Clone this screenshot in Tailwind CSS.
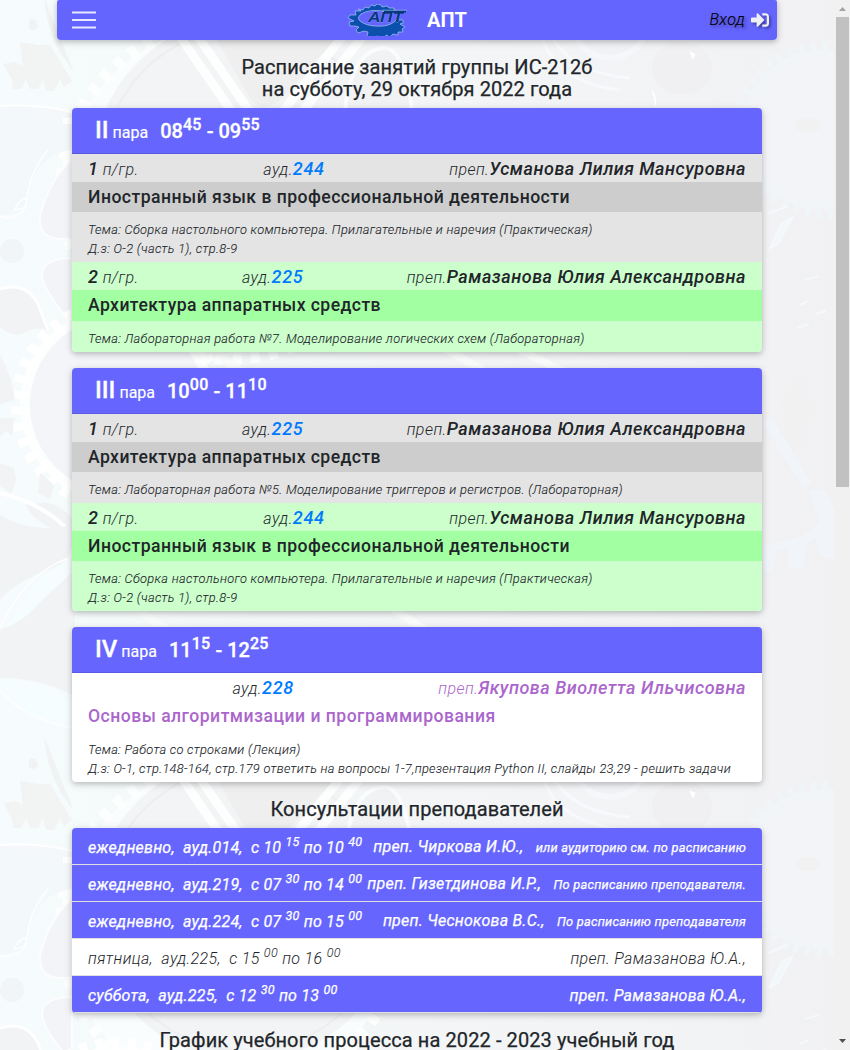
<!DOCTYPE html>
<html lang="ru">
<head>
<meta charset="utf-8">
<title>АПТ</title>
<script src="https://cdn.jsdelivr.net/npm/@tailwindcss/browser@4"></script>
</head>
<body class="relative h-[1050px] w-[850px] overflow-hidden bg-[#f3f5f7] font-[Roboto,sans-serif] text-[#212529]">
<!-- Background tile with gears -->
<svg class="absolute inset-0 -z-10" width="850" height="1050">
  <defs>
    <linearGradient id="base" x1="0" x2="1" y1="0" y2="0"><stop offset="0" stop-color="#f6fcfd"/><stop offset=".3" stop-color="#f4f7f8"/><stop offset=".8" stop-color="#f2f3f5"/><stop offset="1" stop-color="#f1f1f3"/></linearGradient>
    <pattern id="tile" width="850" height="739" patternUnits="userSpaceOnUse">
      <rect width="850" height="739" fill="url(#base)"/>
      <!-- upper centre wheel -->
      <circle cx="230" cy="190" r="165" fill="#f9fdfe"/>
      <circle cx="230" cy="190" r="168" fill="none" stroke="#fdfefe" stroke-width="14" stroke-dasharray="9 9"/>
      <circle cx="245" cy="170" r="152" fill="#f3f4f5"/>
      <circle cx="245" cy="170" r="142" fill="none" stroke="#eceef0" stroke-width="2"/>
      <path d="M172 25 L232 112M190 25L250 112M352 25L282 112M372 25L302 112" stroke="#fdfefe" stroke-width="9"/>
      <path d="M215 0H335Q346 25 330 45L280 100Q262 115 250 98L214 35Q208 15 215 0" fill="#efefef"/>
      <path d="M345 110Q352 50 384 48Q404 48 412 110" fill="#f0f2f3" stroke="#fafcfd" stroke-width="4"/>
      <path d="M540 30Q552 82 620 90M545 20Q560 72 630 78" fill="none" stroke="#f7f9fc" stroke-width="3"/>
      <circle cx="610" cy="20" r="38" fill="#f0f2f6" stroke="#f5f7fb" stroke-width="6"/>
      <ellipse cx="682" cy="68" rx="30" ry="26" fill="#f0f0f2"/>
      <path d="M690 52l5 2-2 5zM652 90q5 7 3 16" fill="#fff" stroke="#fff"/>
      <!-- upper left fragments -->
      <path d="M20 42l18 3 12 0 22 36-8 6-4-8-6 12h-8l-3-12-5 10h-8l-4-10-5 10h-8l-1-10-9-15 12-2 8 4z" fill="#f2f3f3"/>
      <path d="M30 20l5 0 3 7-5 3-4-2zM45 0q3 40 28 70" fill="#f0f2f3" stroke="#eff4f5"/>
      <path d="M0 107Q40 104 75 114V145H0z" fill="#f4f8fa"/>
      <path d="M0 106Q40 103 75 113" fill="none" stroke="#fff" stroke-width="2"/>
      <path d="M68 118v105" stroke="#fff" stroke-width="10" stroke-dasharray="6 8"/>
      <path d="M0 115Q55 118 72 132V150Q30 155 26 210L0 216z" fill="#f3f8fa"/>
      <path d="M14 210q8-14 13-10l-3 8zM48 150Q27 175 26 208Q10 222 0 216" fill="none" stroke="#fff" stroke-width="1.5"/>
      <path d="M72 160Q50 178 40 216Q38 238 60 239L72 239z" fill="#f2f4f7" stroke="#fbfdfe" stroke-width="2"/>
      <path d="M72 258Q42 258 42 276Q44 290 66 317L72 310z" fill="#f2f4f7" stroke="#fbfdfe" stroke-width="2"/>
      <circle cx="12" cy="251" r="12" fill="#f2f5f7"/>
      <path d="M0 290Q26 282 36 302L47 330Q35 326 24 333Q12 338 0 327z" fill="#f2f3f4"/>
      <path d="M0 289Q26 281 38 304L48 330" fill="none" stroke="#fff" stroke-width="3"/>
      <!-- lower left gear -->
      <circle cx="118" cy="405" r="93" fill="#f3f5f8" stroke="#fdfffe" stroke-width="10"/>
      <circle cx="118" cy="405" r="100" fill="none" stroke="#fff" stroke-width="14" stroke-dasharray="8 8"/>
      <path d="M0 355Q12 375 15 400L0 404zM0 418l14 0-2 18-6-5-6 5zM0 463l14 5 2 12-5 14-11-8zM40 473l14 12-4 14-12-6zM26 505q30-8 46 14v20Q30 520 26 505" fill="#f2f3f4"/>
      <path d="M0 493Q48 505 72 535" fill="none" stroke="#fff" stroke-width="4"/>
      <path d="M0 515Q35 535 72 525V545Q70 565 40 573Q12 585 0 600z" fill="#f2f3f4"/>
      <path d="M0 628Q12 622 22 602Q42 568 72 560Q66 590 42 606Q22 625 0 628M0 680Q45 678 72 700V728Q25 720 0 690z" fill="#f6fdfe"/>
      <path d="M0 628Q24 575 68 558M0 691Q26 720 72 728" fill="none" stroke="#fff" stroke-width="1.5"/>
      <path d="M0 630Q24 622 40 602L75 570V697Q45 678 0 678z" fill="#f2f3f4"/>
      <!-- centre fragments between the cards -->
      <path d="M210 340Q240 390 300 375M430 340l70 40M130 605l45 30M380 600l60 40M520 350l60 30" stroke="#fafcfc" stroke-width="8" fill="none"/>
      <!-- right gear -->
      <circle cx="822" cy="130" r="77" fill="none" stroke="#f1f5f8" stroke-width="6"/>
      <circle cx="822" cy="130" r="84" fill="none" stroke="#f0f5f8" stroke-width="9" stroke-dasharray="5 7"/>
      <circle cx="822" cy="130" r="74" fill="#f2f4f7"/>
      <ellipse cx="808" cy="125" rx="13" ry="7" fill="#f2f1f2"/>
      <path d="M770 248l12-25 10-5-14 26zM800 305l8-4M805 280l14-4M797 328l12-4M816 314l10-3M768 214l20-8" stroke="#f5f9fc" stroke-width="2" fill="#f2f7fa"/>
      <path d="M780 400l20-28 12 35-8 42-14 5z" fill="#f2f1f1"/>
      <path d="M764 545q40-5 55-22l-10-33h16l9 20v50l-14-4-4-18-10 6-2 24h-16v-20l-12 2-4 22h-9z" fill="#f1f5f9"/>
      <path d="M767 420l40 65" stroke="#f1f5f9" stroke-width="10"/>
    </pattern>
  </defs>
  <rect width="850" height="1050" fill="url(#tile)"/>
</svg>

<div class="flex h-full">
<div class="h-full w-[834px]">
  <header class="relative mx-auto flex h-10 w-[720px] items-center justify-between rounded-b-[4px] rounded-t-[2px] bg-[#6161ff]/98 pl-[15px] pr-2 shadow-[0_2px_5px_rgba(0,0,0,.16),0_2px_10px_rgba(0,0,0,.12)]">
    <svg width="25" height="20" viewBox="0 0 25 20"><path d="M0 2.500h24M0 10h24M0 17.500h24" stroke="#fff" stroke-width="2" stroke-opacity=".85"/></svg>
    <div class="absolute left-[290px] top-0 flex h-10 items-center">
      <svg width="60" height="32" viewBox="0 0 60 32">
        <path fill="#0b50ad" fill-rule="evenodd" stroke="#a9c6ee" stroke-width=".7" d="M11 5l5 1 2-3 4 1 2-3 4 1 2-2 4 1 1 2 5-1 2 2 5 0 0 2 3 1H36Q22 5 14 10Q8 15 16 19Q24 23 36 22Q45 21 49 16H56v3l-3 1 5 3-3 2 1 3-5 0 0 3-5-1-3 3-4-2-1 4-6 1-1-4-4 1-3 1-4-2 1-4-4-1-6 2-2-3 3-3-4-1-5 0-1-4 5-1-6-3 2-3 6 0-1-4 6 0z"/>
        <text x="21" y="18" textLength="35" lengthAdjust="spacingAndGlyphs" font-family="Liberation Sans" font-size="14" font-weight="700" font-style="italic" fill="#07377f" stroke="#8fb4e8" stroke-width=".4" paint-order="stroke">АПТ</text>
        <path d="M37 7.500h22" stroke="#07377f" stroke-width="2"/><path d="M35 6.200h25" stroke="#a9c6ee" stroke-width=".6"/>
      </svg>
      <span class="ml-5 text-[20px] font-bold leading-none text-white">АПТ</span>
    </div>
    <div class="flex items-center gap-[6px] text-black">
      <span class="text-[16px] font-light italic tracking-[.4px] [-webkit-text-stroke:.15px] [text-shadow:2px_2px_3px_rgba(0,0,0,.4)]">Вход</span>
      <svg class="drop-shadow-[2px_2px_1px_rgba(0,0,0,.35)]" width="18" height="18" viewBox="0 0 512 512" fill="#f0f0f3"><path d="M416 448h-84c-6.600 0-12-5.400-12-12v-40c0-6.600 5.400-12 12-12h84c17.700 0 32-14.300 32-32V160c0-17.700-14.300-32-32-32h-84c-6.600 0-12-5.400-12-12V76c0-6.600 5.400-12 12-12h84c53 0 96 43 96 96v192c0 53-43 96-96 96zm-47-209L201 71c-15-15-41-4.500-41 17v96H24c-13.300 0-24 10.700-24 24v96c0 13.300 10.700 24 24 24h136v96c0 21.500 26 32 41 17l168-168c9.300-9.400 9.300-24.600 0-34z"/></svg>
    </div>
  </header>

  <main class="ml-[72px] w-[690px]">
    <h1 class="pt-4 text-center text-[20px] leading-[22px] tracking-[.08px] [-webkit-text-stroke:.25px]">Расписание занятий группы ИС-212б<br>на субботу, 29 октября 2022 года</h1>

    <section class="mt-[8px] overflow-hidden rounded-[4px] shadow-[0_2px_5px_rgba(0,0,0,.16),0_2px_10px_rgba(0,0,0,.12)]">
      <div class="h-[46px] border-b border-[#5a5ae2] bg-[#66f] pl-[23px] text-[20px] font-medium leading-[44px] text-white [-webkit-text-stroke:.3px]"><span class="text-[24px]">II</span><span class="ml-1 text-[16px] font-normal [-webkit-text-stroke:.15px]">пара</span> <span class="ml-[7px]">08<sup class="text-[16px] leading-none tracking-[.3px]">45</sup> - 09<sup class="text-[16px] leading-none tracking-[.3px]">55</sup></span></div>
      <div class="flex h-7 items-center justify-between bg-[#e4e4e4] px-4 pt-[2px] font-light italic leading-[26px] tracking-[.45px]"><div><span class="text-[18px] font-medium">1</span> п/гр.</div><div>ауд.<span class="text-[18px] font-medium tracking-[.7px] text-[#007bff]">244</span></div><div>преп.<span class="text-[18px] font-medium tracking-[.53px]">Усманова Лилия Мансуровна</span></div></div>
      <div class="h-[30px] bg-[#cdcdcd] px-4 text-[17.600px] font-medium leading-[30px] tracking-[.47px]">Иностранный язык в профессиональной деятельности</div>
      <div class="h-[50px] bg-[#e4e4e4] px-4 pt-2 text-[12.800px] font-light italic leading-[19px] tracking-[.31px] [-webkit-text-stroke:.1px]">Тема: Сборка настольного компьютера. Прилагательные и наречия (Практическая)<br>Д.з: О-2 (часть 1), стр.8-9</div>
      <div class="flex h-7 items-center justify-between bg-[#cfc] px-4 pt-[2px] font-light italic leading-[26px] tracking-[.45px]"><div><span class="text-[18px] font-medium">2</span> п/гр.</div><div>ауд.<span class="text-[18px] font-medium tracking-[.7px] text-[#007bff]">225</span></div><div>преп.<span class="text-[18px] font-medium tracking-[.53px]">Рамазанова Юлия Александровна</span></div></div>
      <div class="h-[31px] bg-[#a2ffa2] px-4 text-[17.600px] font-medium leading-[30px] tracking-[.42px]">Архитектура аппаратных средств</div>
      <div class="h-[31px] bg-[#cfc] px-4 pt-2 text-[12.800px] font-light italic leading-[19px] tracking-[.31px] [-webkit-text-stroke:.1px]">Тема: Лабораторная работа №7. Моделирование логических схем (Лабораторная)</div>
    </section>

    <section class="mt-4 overflow-hidden rounded-[4px] shadow-[0_2px_5px_rgba(0,0,0,.16),0_2px_10px_rgba(0,0,0,.12)]">
      <div class="h-[46px] border-b border-[#5a5ae2] bg-[#66f] pl-[23px] text-[20px] font-medium leading-[44px] text-white [-webkit-text-stroke:.3px]"><span class="text-[24px]">III</span><span class="ml-1 text-[16px] font-normal [-webkit-text-stroke:.15px]">пара</span> <span class="ml-[7px]">10<sup class="text-[16px] leading-none tracking-[.3px]">00</sup> - 11<sup class="text-[16px] leading-none tracking-[.3px]">10</sup></span></div>
      <div class="flex h-7 items-center justify-between bg-[#e4e4e4] px-4 pt-[2px] font-light italic leading-[26px] tracking-[.45px]"><div><span class="text-[18px] font-medium">1</span> п/гр.</div><div>ауд.<span class="text-[18px] font-medium tracking-[.7px] text-[#007bff]">225</span></div><div>преп.<span class="text-[18px] font-medium tracking-[.53px]">Рамазанова Юлия Александровна</span></div></div>
      <div class="h-[30px] bg-[#cdcdcd] px-4 text-[17.600px] font-medium leading-[30px] tracking-[.42px]">Архитектура аппаратных средств</div>
      <div class="h-[31px] bg-[#e4e4e4] px-4 pt-2 text-[12.800px] font-light italic leading-[19px] tracking-[.31px] [-webkit-text-stroke:.1px]">Тема: Лабораторная работа №5. Моделирование триггеров и регистров. (Лабораторная)</div>
      <div class="flex h-7 items-center justify-between bg-[#cfc] px-4 pt-[2px] font-light italic leading-[26px] tracking-[.45px]"><div><span class="text-[18px] font-medium">2</span> п/гр.</div><div>ауд.<span class="text-[18px] font-medium tracking-[.7px] text-[#007bff]">244</span></div><div>преп.<span class="text-[18px] font-medium tracking-[.53px]">Усманова Лилия Мансуровна</span></div></div>
      <div class="h-[30px] bg-[#a2ffa2] px-4 text-[17.600px] font-medium leading-[30px] tracking-[.47px]">Иностранный язык в профессиональной деятельности</div>
      <div class="h-[50px] bg-[#cfc] px-4 pt-2 text-[12.800px] font-light italic leading-[19px] tracking-[.31px] [-webkit-text-stroke:.1px]">Тема: Сборка настольного компьютера. Прилагательные и наречия (Практическая)<br>Д.з: О-2 (часть 1), стр.8-9</div>
    </section>

    <section class="mt-4 overflow-hidden rounded-[4px] bg-white shadow-[0_2px_5px_rgba(0,0,0,.16),0_2px_10px_rgba(0,0,0,.12)]">
      <div class="h-[46px] border-b border-[#5a5ae2] bg-[#66f] pl-[23px] text-[20px] font-medium leading-[44px] text-white [-webkit-text-stroke:.3px]"><span class="text-[24px]">IV</span><span class="ml-1 text-[16px] font-normal [-webkit-text-stroke:.15px]">пара</span> <span class="ml-[7px]">11<sup class="text-[16px] leading-none tracking-[.3px]">15</sup> - 12<sup class="text-[16px] leading-none tracking-[.3px]">25</sup></span></div>
      <div class="flex h-7 items-center justify-between px-4 pt-[2px] font-light italic leading-[26px] tracking-[.45px]"><div></div><div>ауд.<span class="text-[18px] font-medium tracking-[.7px] text-[#007bff]">228</span></div><div class="text-[#a6c]">преп.<span class="text-[18px] font-medium tracking-[.53px]">Якупова Виолетта Ильчисовна</span></div></div>
      <div class="h-[30px] px-4 text-[17.600px] font-medium leading-[30px] tracking-[.47px] text-[#a6c]">Основы алгоритмизации и программирования</div>
      <div class="h-[51px] px-4 pt-[9px] text-[12.800px] font-light italic leading-[19px] tracking-[.28px] [-webkit-text-stroke:.1px]">Тема: Работа со строками (Лекция)<br>Д.з: О-1, стр.148-164, стр.179 ответить на вопросы 1-7,презентация Python II, слайды 23,29 - решить задачи</div>
    </section>

    <h2 class="mt-4 text-center text-[20px] leading-[22px] tracking-[.08px] [-webkit-text-stroke:.25px]">Консультации преподавателей</h2>
    <section class="mt-2 overflow-hidden rounded-[4px] bg-[#66f] italic tracking-[.22px] text-white shadow-[0_2px_5px_rgba(0,0,0,.16),0_2px_10px_rgba(0,0,0,.12)] [-webkit-text-stroke:.25px]">
      <div class="flex h-[37px] items-center justify-between whitespace-pre border-b border-[#dfdfdf] px-4 pt-[3px] leading-8"><div>ежедневно,  ауд.014,  с 10 <sup class="text-[12.500px] leading-none">15</sup> по 10 <sup class="text-[12.500px] leading-none">40</sup></div><div>преп. Чиркова И.Ю.,   <span class="text-[12.800px]">или аудиторию см. по расписанию</span></div></div>
      <div class="flex h-[37px] items-center justify-between whitespace-pre border-b border-[#dfdfdf] px-4 pt-[3px] leading-8"><div>ежедневно,  ауд.219,  с 07 <sup class="text-[12.500px] leading-none">30</sup> по 14 <sup class="text-[12.500px] leading-none">00</sup></div><div>преп. Гизетдинова И.Р.,   <span class="text-[12.800px]">По расписанию преподавателя.</span></div></div>
      <div class="flex h-[37px] items-center justify-between whitespace-pre border-b border-[#dfdfdf] px-4 pt-[3px] leading-8"><div>ежедневно,  ауд.224,  с 07 <sup class="text-[12.500px] leading-none">30</sup> по 15 <sup class="text-[12.500px] leading-none">00</sup></div><div>преп. Чеснокова В.С.,   <span class="text-[12.800px]">По расписанию преподавателя</span></div></div>
      <div class="flex h-[37px] items-center justify-between whitespace-pre border-b border-[#dfdfdf] bg-white px-4 pt-[3px] font-light leading-8 tracking-[.35px] text-[#212529] [-webkit-text-stroke:0]"><div>пятница,  ауд.225,  с 15 <sup class="text-[12.500px] leading-none">00</sup> по 16 <sup class="text-[12.500px] leading-none">00</sup></div><div>преп. Рамазанова Ю.А.,</div></div>
      <div class="flex h-[37px] items-center justify-between whitespace-pre border-b border-[#dfdfdf] px-4 pt-[3px] leading-8"><div>суббота,  ауд.225,  с 12 <sup class="text-[12.500px] leading-none">30</sup> по 13 <sup class="text-[12.500px] leading-none">00</sup></div><div>преп. Рамазанова Ю.А.,</div></div>
    </section>
    <h2 class="mt-4 text-center text-[20px] leading-[22px] tracking-[.1px] [-webkit-text-stroke:.25px]">График учебного процесса на 2022 - 2023 учебный год</h2>
  </main>
</div>
<!-- Scrollbar -->
<div class="flex h-full w-4 flex-col items-center justify-between bg-[#f1f1f1] pb-[7px] pt-[7px]">
  <div class="flex flex-col items-center gap-[6px]"><svg width="7" height="4"><path d="M0 4L3.500 0 7 4z" fill="#a3a3a3"/></svg><div class="h-[470px] w-[13px] bg-[#c1c1c1]"></div></div>
  <svg width="7" height="4"><path d="M0 0L3.500 4 7 0z" fill="#505050"/></svg>
</div>
</div>
</body>
</html>
